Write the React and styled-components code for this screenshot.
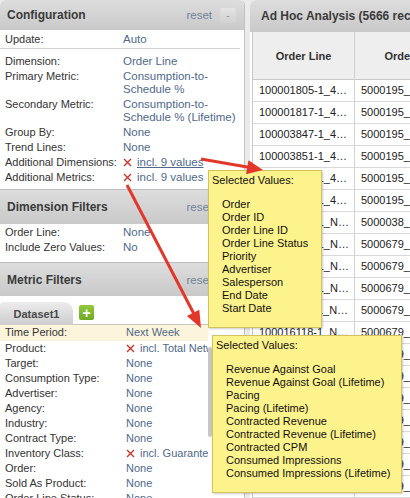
import React from "react";
import styled, { createGlobalStyle } from "styled-components";

const GlobalStyle = createGlobalStyle`
  html, body {
    margin: 0;
    padding: 0;
  }
  body {
    background: #ebebeb;
    font-family: "Liberation Sans", Arial, Helvetica, sans-serif;
    overflow: hidden;
  }
`;

const configRows = [
  { label: "Dimension:", value: "Order Line" },
  { label: "Primary Metric:", value: ["Consumption-to-", "Schedule %"] },
  { label: "Secondary Metric:", value: ["Consumption-to-", "Schedule % (Lifetime)"] },
  { label: "Group By:", value: "None" },
  { label: "Trend Lines:", value: "None" },
  { label: "Additional Dimensions:", value: "incl. 9 values", removable: true, hovered: true },
  { label: "Additional Metrics:", value: "incl. 9 values", removable: true },
];

const metricRows = [
  { label: "Time Period:", value: "Next Week", active: true },
  { label: "Product:", value: "incl. Total Network Revenue", removable: true },
  { label: "Target:", value: "None" },
  { label: "Consumption Type:", value: "None" },
  { label: "Advertiser:", value: "None" },
  { label: "Agency:", value: "None" },
  { label: "Industry:", value: "None" },
  { label: "Contract Type:", value: "None" },
  { label: "Inventory Class:", value: "incl. Guaranteed", removable: true },
  { label: "Order:", value: "None" },
  { label: "Sold As Product:", value: "None" },
  { label: "Order Line Status:", value: "None" },
];

const tableRows = [
  ["100001805-1_4…", "5000195_4…"],
  ["100001817-1_4…", "5000195_4…"],
  ["100003847-1_4…", "5000195_4…"],
  ["100003851-1_4…", "5000195_4…"],
  ["100003855-1_4…", "5000195_4…"],
  ["100003859-1_4…", "5000195_4…"],
  ["100009461-1_N…", "5000038_0…"],
  ["100016101-1_N…", "5000679_N…"],
  ["100016105-1_N…", "5000679_N…"],
  ["100016109-1_N…", "5000679_N…"],
  ["100016113-1_N…", "5000679_N…"],
  ["100016118-1_N…", "5000679_N…"],
  ["100016122-1_N…", "5000679_N…"],
  ["100016126-1_N…", "5000679_N…"],
  ["100016130-1_N…", "5000679_N…"],
  ["100016134-1_N…", "5000679_N…"],
  ["100016138-1_N…", "5000679_N…"],
  ["100016142-1_N…", "5000679_N…"],
  ["100016146-1_N…", "5000679_N…"],
];

const dimensionValues = [
  "Order",
  "Order ID",
  "Order Line ID",
  "Order Line Status",
  "Priority",
  "Advertiser",
  "Salesperson",
  "End Date",
  "Start Date",
];

const metricValues = [
  "Revenue Against Goal",
  "Revenue Against Goal (Lifetime)",
  "Pacing",
  "Pacing (Lifetime)",
  "Contracted Revenue",
  "Contracted Revenue (Lifetime)",
  "Contracted CPM",
  "Consumed Impressions",
  "Consumed Impressions (Lifetime)",
];

const RemoveIcon = () => (
  <XMark viewBox="0 0 9 9" width="9" height="9">
    <path d="M1 1 L8 8 M8 1 L1 8" stroke="#c8352c" strokeWidth="1.4" fill="none" />
  </XMark>
);

const Value = ({ row }) => (
  <ValueText $hovered={row.hovered}>
    {row.removable && <RemoveIcon />}
    {Array.isArray(row.value) ? (
      <>
        {row.value[0]}
        <br />
        {row.value[1]}
      </>
    ) : (
      <span>{row.value}</span>
    )}
  </ValueText>
);

const Header = ({ title, height, first }) => (
  <SectionHeader $h={height} $first={first}>
    <HeaderTitle>{title}</HeaderTitle>
    <HeaderTools>
      <ResetLink>reset</ResetLink>
      <CollapseBtn>-</CollapseBtn>
    </HeaderTools>
  </SectionHeader>
);

const App = () => {
  return (
    <Screen>
      <GlobalStyle />
      <LeftColumn>
        <Header title="Configuration" height={30} first />
        <ConfigBody>
          <Row>
            <Label>Update:</Label>
            <ValueText>Auto</ValueText>
          </Row>
          <Divider />
          {configRows.map((row) => (
            <Row key={row.label}>
              <Label>{row.label}</Label>
              <Value row={row} />
            </Row>
          ))}
        </ConfigBody>

        <Header title="Dimension Filters" height={35} />
        <DimensionBody>
          <Row>
            <Label>Order Line:</Label>
            <ValueText>None</ValueText>
          </Row>
          <Row>
            <Label>Include Zero Values:</Label>
            <ValueText>No</ValueText>
          </Row>
        </DimensionBody>

        <Header title="Metric Filters" height={34} />
        <TabStrip>
          <Tab>Dataset1</Tab>
          <AddTab>+</AddTab>
        </TabStrip>
        <MetricArea>
          <MetricList>
            {metricRows.map((row) => (
              <MetricRow key={row.label} $active={row.active}>
                <Label>{row.label}</Label>
                <Value row={row} />
              </MetricRow>
            ))}
          </MetricList>
          <ScrollTrack>
            <ScrollThumb />
          </ScrollTrack>
        </MetricArea>
      </LeftColumn>

      <RightColumn>
        <RightHeader>Ad Hoc Analysis (5666 records)</RightHeader>
        <TableWrap>
          <Table>
            <HeadCell>Order Line</HeadCell>
            <HeadCell>Order ID</HeadCell>
            <HeadCell>Order Line ID</HeadCell>
            {tableRows.map((r, i) => (
              <React.Fragment key={i}>
                <Cell>{r[0]}</Cell>
                <Cell>{r[1]}</Cell>
                <Cell />
              </React.Fragment>
            ))}
          </Table>
        </TableWrap>
      </RightColumn>

      <Tooltip $left={208} $top={170} $width={114}>
        <TipTitle>Selected Values:</TipTitle>
        <TipList>
          {dimensionValues.map((v) => (
            <TipItem key={v}>{v}</TipItem>
          ))}
        </TipList>
      </Tooltip>

      <Tooltip $left={212} $top={335} $width={190}>
        <TipTitle>Selected Values:</TipTitle>
        <TipList>
          {metricValues.map((v) => (
            <TipItem key={v}>{v}</TipItem>
          ))}
        </TipList>
      </Tooltip>

      <ArrowLayer viewBox="0 0 410 498" width="410" height="498">
        <line x1="201" y1="159" x2="250" y2="167.5" stroke="#e1382b" strokeWidth="3" />
        <polygon points="263,170 246,174.3 248.5,160.2" fill="#e1382b" />
        <line x1="127" y1="185" x2="194" y2="314" stroke="#e1382b" strokeWidth="3" />
        <polygon points="201,328 186.9,316.1 199.3,309.7" fill="#e1382b" />
      </ArrowLayer>
    </Screen>
  );
};

export default App;

const Screen = styled.div`
  position: relative;
  width: 410px;
  height: 498px;
  overflow: hidden;
  display: grid;
  grid-template-columns: 245px 1fr;
  column-gap: 5px;
  background: #ebebeb;
`;

const LeftColumn = styled.div`
  display: flex;
  flex-direction: column;
  background: #fff;
  border-right: 1px solid #c2c2c2;
  border-radius: 5px 5px 0 0;
  overflow: hidden;
`;

const SectionHeader = styled.div`
  display: flex;
  align-items: center;
  justify-content: space-between;
  flex-shrink: 0;
  height: ${(p) => p.$h}px;
  box-sizing: border-box;
  padding: 0 8px 0 7px;
  background: linear-gradient(#dddddd, #c9c9c9);
  border-top: ${(p) => (p.$first ? "none" : "1px solid #bdbdbd")};
  border-radius: ${(p) => (p.$first ? "5px 5px 0 0" : "0")};
`;

const HeaderTitle = styled.span`
  font-size: 12px;
  font-weight: bold;
  color: #3a3a3a;
`;

const HeaderTools = styled.div`
  display: flex;
  align-items: center;
  gap: 8px;
`;

const ResetLink = styled.span`
  font-size: 11.5px;
  color: #6f8397;
`;

const CollapseBtn = styled.span`
  display: flex;
  align-items: center;
  justify-content: center;
  width: 16px;
  height: 15px;
  background: linear-gradient(#e4e4e4, #d2d2d2);
  border-radius: 2px;
  font-size: 10px;
  color: #8a8a8a;
`;

const ConfigBody = styled.div`
  padding: 2px 0 4px;
`;

const DimensionBody = styled.div`
  padding: 1px 0 7px;
`;

const Row = styled.div`
  display: grid;
  grid-template-columns: 118px 1fr;
  padding: 1px 0 1px 5px;
  font-size: 11.5px;
  line-height: 13px;
`;

const Label = styled.span`
  color: #333;
  font-size: 11px;
  white-space: nowrap;
`;

const ValueText = styled.span`
  display: flex;
  align-items: flex-start;
  flex-wrap: nowrap;
  color: #50698a;
  white-space: nowrap;
  overflow: hidden;

  span {
    text-decoration: ${(p) => (p.$hovered ? "underline" : "none")};
  }
`;

const XMark = styled.svg`
  flex-shrink: 0;
  margin: 2px 5px 0 0;
`;

const Divider = styled.div`
  height: 1px;
  background: #d2d2d2;
  margin: 1px 4px 5px 0;
`;

const TabStrip = styled.div`
  display: flex;
  align-items: flex-start;
  gap: 6px;
  height: 29px;
  box-sizing: border-box;
  padding-top: 6px;
  border-bottom: 1px solid #c6c6c6;
  flex-shrink: 0;
`;

const Tab = styled.div`
  width: 73px;
  height: 23px;
  display: flex;
  align-items: center;
  justify-content: center;
  background: linear-gradient(#ececec, #cdcdcd);
  border-radius: 4px 9px 0 0;
  font-size: 11px;
  font-weight: bold;
  color: #4a4a4a;
`;

const AddTab = styled.div`
  margin-top: 3px;
  width: 15px;
  height: 15px;
  display: flex;
  align-items: center;
  justify-content: center;
  background: linear-gradient(#92c83c, #6fa924);
  border-radius: 2px;
  color: #fff;
  font-size: 14px;
  font-weight: bold;
  line-height: 1;
`;

const MetricArea = styled.div`
  display: flex;
  flex: 1;
  overflow: hidden;
`;

const MetricList = styled.div`
  width: 208px;
  flex-shrink: 0;
  overflow: hidden;
`;

const MetricRow = styled(Row)`
  grid-template-columns: 121px 1fr;
  font-size: 11px;
  padding: ${(p) => (p.$active ? "1px 0 2px 5px" : "1px 0 1px 5px")};
  background: ${(p) => (p.$active ? "#fcf5dc" : "transparent")};
`;

const ScrollTrack = styled.div`
  width: 4px;
  flex-shrink: 0;
  padding-top: 22px;
`;

const ScrollThumb = styled.div`
  height: 90px;
  background: #c6c6c6;
  border-radius: 2px;
`;

const RightColumn = styled.div`
  display: flex;
  flex-direction: column;
  background: #fff;
  border-radius: 6px 0 0 0;
  overflow: hidden;
`;

const RightHeader = styled.div`
  height: 32px;
  flex-shrink: 0;
  display: flex;
  align-items: center;
  padding-left: 11px;
  background: linear-gradient(#dddddd, #c9c9c9);
  font-size: 12px;
  font-weight: bold;
  color: #3a3a3a;
  white-space: nowrap;
`;

const TableWrap = styled.div`
  padding-left: 2px;
  overflow: hidden;
`;

const Table = styled.div`
  display: grid;
  grid-template-columns: 102px 104px 104px;
  width: max-content;
  border-left: 1px solid #c9c9c9;
`;

const HeadCell = styled.div`
  height: 48px;
  box-sizing: border-box;
  display: flex;
  align-items: center;
  justify-content: center;
  background: #eeeeee;
  border-right: 1px solid #cfcfcf;
  border-bottom: 1px solid #c9c9c9;
  font-size: 11px;
  font-weight: bold;
  color: #333;
  white-space: nowrap;
`;

const Cell = styled.div`
  height: 22px;
  box-sizing: border-box;
  padding-left: 6px;
  line-height: 21px;
  border-right: 1px solid #d4d4d4;
  border-bottom: 1px solid #d9d9d9;
  font-size: 11px;
  color: #222;
  white-space: nowrap;
  overflow: hidden;
`;

const Tooltip = styled.div`
  position: absolute;
  left: ${(p) => p.$left}px;
  top: ${(p) => p.$top}px;
  width: ${(p) => p.$width}px;
  height: 158px;
  box-sizing: border-box;
  padding: 3px 0 0 3px;
  background: #fdf38c;
  border: 1px solid #d3c35c;
  box-shadow: 1px 1px 2px rgba(0, 0, 0, 0.2);
  font-size: 11px;
  line-height: 13px;
  color: #111;
  z-index: 2;
`;

const TipTitle = styled.div`
  white-space: nowrap;
`;

const TipList = styled.div`
  margin-top: 11px;
  padding-left: 10px;
`;

const TipItem = styled.div`
  white-space: nowrap;
`;

const ArrowLayer = styled.svg`
  position: absolute;
  left: 0;
  top: 0;
  pointer-events: none;
  z-index: 3;
`;
